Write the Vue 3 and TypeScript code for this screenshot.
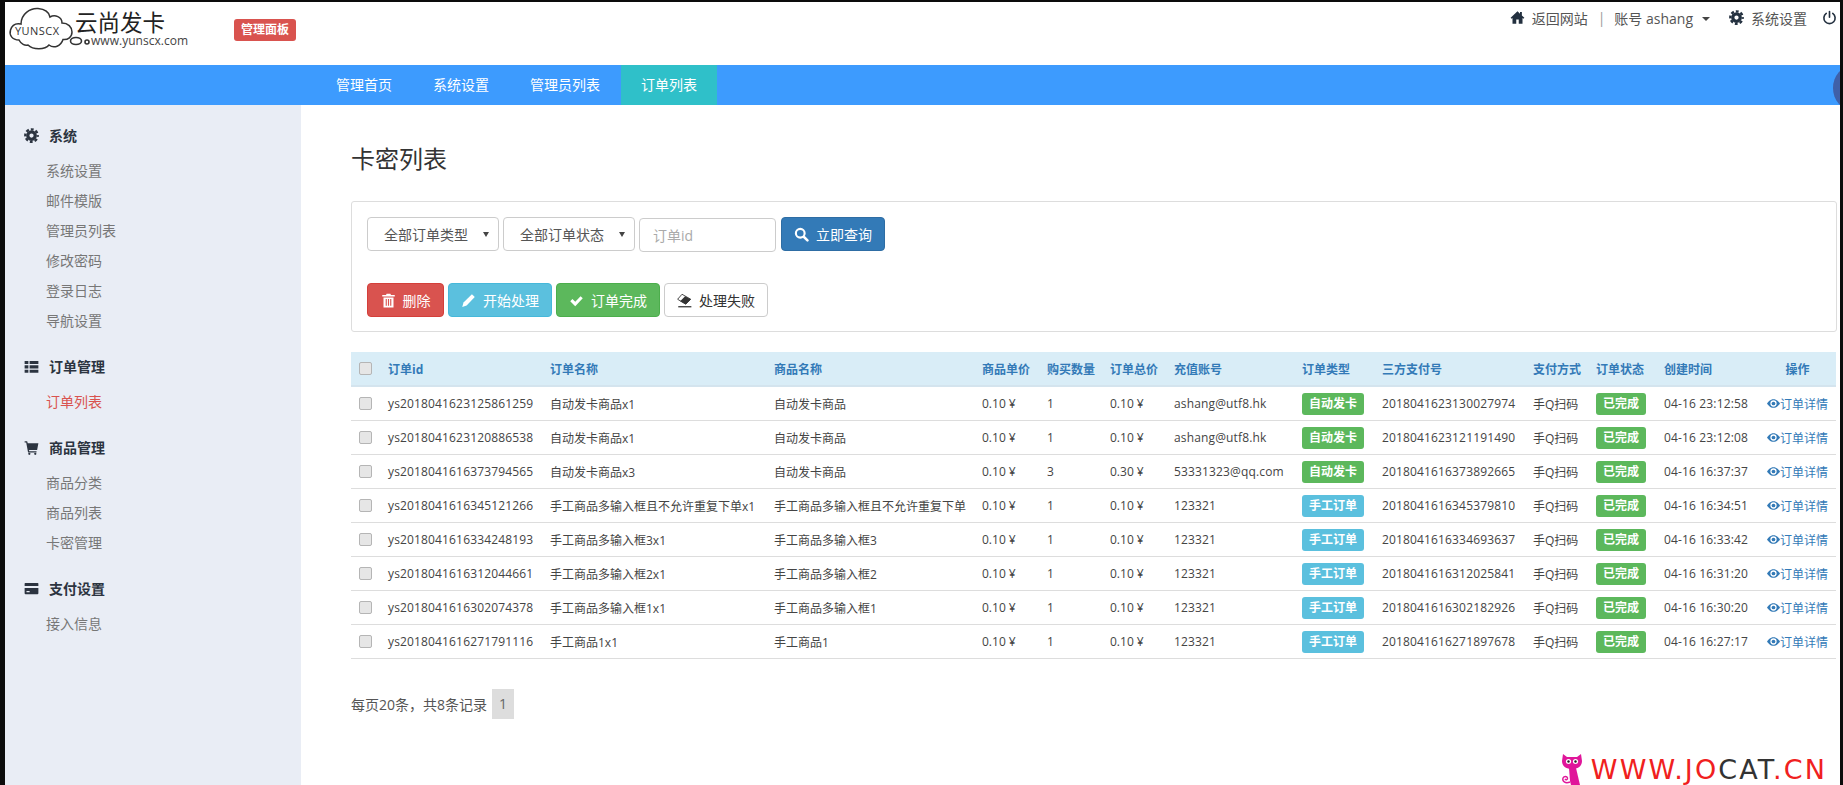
<template>
  <div class="page">
    <!-- icon sprite -->
    <svg class="sprite" aria-hidden="true">
      <symbol id="ic-gear" viewBox="0 0 24 24">
        <circle cx="12" cy="12" r="6" fill="none" stroke="currentColor" stroke-width="5.2" />
        <circle cx="12" cy="12" r="10" fill="none" stroke="currentColor" stroke-width="3.6" stroke-dasharray="4.6 3.25" stroke-dashoffset="2.3" />
      </symbol>
      <symbol id="ic-home" viewBox="0 0 24 24">
        <path fill="currentColor" d="M12 2 1 12.5l1.6 1.6L4 12.9V22h6v-7h4v7h6v-9.1l1.4 1.2 1.6-1.6L19 8.8V3h-3v3.1z" />
      </symbol>
      <symbol id="ic-power" viewBox="0 0 24 24">
        <path fill="none" stroke="currentColor" stroke-width="2.6" stroke-linecap="round" d="M12 2.5v9M6.8 5.5a9 9 0 1 0 10.4 0" />
      </symbol>
      <symbol id="ic-list" viewBox="0 0 24 24">
        <path fill="currentColor" d="M1 3h6v5H1zM9 3h14v5H9zM1 10h6v5H1zM9 10h14v5H9zM1 17h6v5H1zM9 17h14v5H9z" />
      </symbol>
      <symbol id="ic-cart" viewBox="0 0 24 24">
        <path fill="currentColor" d="M1 2h4l1 3h17l-2 11H8l.4 2H20v2H6.5L3.5 4H1z" />
        <circle cx="8.5" cy="22" r="1.8" fill="currentColor" />
        <circle cx="18" cy="22" r="1.8" fill="currentColor" />
      </symbol>
      <symbol id="ic-card" viewBox="0 0 24 24">
        <path fill="currentColor" d="M2 3h20a1.5 1.5 0 0 1 1 1.5V8H1V4.5A1.5 1.5 0 0 1 2 3zM1 11h22v8.5a1.5 1.5 0 0 1-1.5 1.5h-19A1.5 1.5 0 0 1 1 19.5zM4 16v2h5v-2z" />
      </symbol>
      <symbol id="ic-search" viewBox="0 0 24 24">
        <circle cx="10" cy="10" r="7" fill="none" stroke="currentColor" stroke-width="3.4" />
        <path stroke="currentColor" stroke-width="4" stroke-linecap="round" d="m16 16 5.5 5.5" />
      </symbol>
      <symbol id="ic-trash" viewBox="0 0 24 24">
        <path fill="currentColor" d="M9 1h6l1 2h6v2.5H2V3h6zM4 7h16v16H4zm3.5 2.5v11h1.8v-11zm3.6 0v11h1.8v-11zm3.6 0v11h1.8v-11z" fill-rule="evenodd" />
      </symbol>
      <symbol id="ic-pencil" viewBox="0 0 24 24">
        <path fill="currentColor" d="M17.5 2 22 6.5 9 20l-7 2.5L4 15z" />
      </symbol>
      <symbol id="ic-check" viewBox="0 0 24 24">
        <path fill="currentColor" d="m2 13 3.5-3.5L10 14l8.5-9L22 8.5 10 21z" />
      </symbol>
      <symbol id="ic-eraser" viewBox="0 0 24 24">
        <path fill="#fff" stroke="currentColor" stroke-width="1.4" d="M8 2 22 10l-8 8-13-8z" />
        <path fill="currentColor" d="M13 5l9 5-8 8-9-5z" />
        <path stroke="currentColor" stroke-width="2" d="M2 22h21" />
      </symbol>
      <symbol id="ic-eye" viewBox="0 0 24 24">
        <path fill="currentColor" fill-rule="evenodd" d="M12 4C6 4 2 9 0 12c2 3 6 8 12 8s10-5 12-8c-2-3-6-8-12-8zm0 2.2a5.8 5.8 0 1 1 0 11.6 5.8 5.8 0 0 1 0-11.6z" />
        <circle cx="12" cy="12" r="3.4" fill="currentColor" />
      </symbol>
    </svg>

    <header class="topbar">
      <svg class="logo" viewBox="5 2 190 62" width="190" height="62">
        <path d="M19 40C12 40 9 35 10.5 30C12 25 16 23 21 24C21 14 30 8 38 8.5C44 9 49 12 50 17C55 14 62 17 62 23C68 23 72 27 72 32C72 37 68 40 63 39.5C61 46 54 49 49 45C45 50 33 50 28 45C25 46 21 44 19 40Z" fill="none" stroke="#333" stroke-width="1.5" />
        <text x="15" y="35" class="logo-en" textLength="44">YUNSCX</text>
        <text x="75" y="31" class="logo-cn">云尚发卡</text>
        <ellipse cx="76" cy="41" rx="5.5" ry="3.5" fill="none" stroke="#333" stroke-width="1.6" />
        <circle cx="87" cy="42" r="2" fill="none" stroke="#333" stroke-width="1.6" />
        <text x="91" y="45" class="logo-url" textLength="97">www.yunscx.com</text>
      </svg>
      <span class="badge">管理面板</span>
      <nav class="toplinks">
        <a class="toplink"><svg class="ico"><use href="#ic-home" /></svg>返回网站</a>
        <span class="sep">|</span>
        <a class="toplink">账号 ashang<i class="caret"></i></a>
        <a class="toplink"><svg class="ico"><use href="#ic-gear" /></svg>系统设置</a>
        <a class="toplink power"><svg class="ico"><use href="#ic-power" /></svg></a>
      </nav>
    </header>

    <div class="mainnav">
      <a v-for="item in navItems" :key="item" class="navitem" :class="{ active: item === '订单列表' }">{{ item }}</a>
      <span class="bubble"></span>
    </div>

    <div class="body">
      <aside class="sidebar">
        <section v-for="group in menu" :key="group.title" class="group">
          <h4 class="group-title"><svg class="group-ico"><use :href="'#' + group.icon" /></svg>{{ group.title }}</h4>
          <a v-for="link in group.links" :key="link" class="sidelink" :class="{ current: link === '订单列表' }">{{ link }}</a>
        </section>
      </aside>

      <main class="content">
        <h2 class="title">卡密列表</h2>

        <div class="panel">
          <div class="row-query">
            <span class="select-wrap">
              <select class="select"><option>全部订单类型</option></select>
            </span>
            <span class="select-wrap">
              <select class="select"><option>全部订单状态</option></select>
            </span>
            <input class="input" type="text" placeholder="订单id" />
            <button class="btn btn-primary query"><svg class="ico"><use href="#ic-search" /></svg>立即查询</button>
          </div>
          <div class="row-actions">
            <button class="btn btn-danger del"><svg class="ico"><use href="#ic-trash" /></svg>删除</button>
            <button class="btn btn-info act"><svg class="ico"><use href="#ic-pencil" /></svg>开始处理</button>
            <button class="btn btn-success act"><svg class="ico"><use href="#ic-check" /></svg>订单完成</button>
            <button class="btn btn-default act"><svg class="ico"><use href="#ic-eraser" /></svg>处理失败</button>
          </div>
        </div>

        <table class="orders">
          <colgroup>
            <col v-for="(w, i) in colWidths" :key="i" :style="{ width: w + 'px' }" />
          </colgroup>
          <thead>
            <tr>
              <th><input class="check" type="checkbox" /></th>
              <th v-for="h in headers" :key="h" :class="{ center: h === '操作' }">{{ h }}</th>
            </tr>
          </thead>
          <tbody>
            <tr v-for="o in orders" :key="o.id">
              <td><input class="check" type="checkbox" /></td>
              <td class="num">{{ o.id }}</td>
              <td>{{ o.name }}</td>
              <td>{{ o.goods }}</td>
              <td>0.10 ¥</td>
              <td>{{ o.qty }}</td>
              <td>{{ o.total }} ¥</td>
              <td class="num">{{ o.account }}</td>
              <td><span class="tag" :class="o.auto ? 'tag-green' : 'tag-blue'">{{ o.auto ? '自动发卡' : '手工订单' }}</span></td>
              <td class="num">{{ o.payNo }}</td>
              <td>手Q扫码</td>
              <td><span class="tag tag-green">已完成</span></td>
              <td class="num">{{ o.time }}</td>
              <td><a class="detail"><svg class="eye"><use href="#ic-eye" /></svg>订单详情</a></td>
            </tr>
          </tbody>
        </table>

        <div class="pager">
          <span>每页20条，共8条记录</span>
          <span class="pageno">1</span>
        </div>
      </main>
    </div>

    <div class="watermark">
      <svg class="cat" viewBox="0 0 22 32" width="22" height="32">
        <path fill="#e0169a" d="M2 1l4 3h10l4-3 1 7c0 5-4 8-10 8S1 13 1 8z" />
        <circle cx="7.5" cy="8.5" r="2.6" fill="#fff" />
        <circle cx="14.5" cy="8.5" r="2.6" fill="#fff" />
        <circle cx="7.5" cy="8.5" r="1.2" fill="#222" />
        <circle cx="14.5" cy="8.5" r="1.2" fill="#222" />
        <path fill="#e0169a" d="M8 15h7l4 17h-9l-1-4z" />
        <path fill="none" stroke="#e0169a" stroke-width="1.4" d="M9 29c-5 2-8-1-7-4 1-2 4-2 4.5 0 .4 1.5-1.5 2.5-2.5 1" />
      </svg>
      <span class="wm-text">WWW.JO<span class="wm-dark">CAT</span>.CN</span>
    </div>
  </div>
</template>

<script setup lang="ts">
interface MenuGroup {
  title: string
  icon: string
  links: string[]
}

interface Order {
  id: string
  name: string
  goods: string
  qty: number
  total: string
  account: string
  auto: boolean
  payNo: string
  time: string
}

const navItems = ['管理首页', '系统设置', '管理员列表', '订单列表']

const menu: MenuGroup[] = [
  { title: '系统', icon: 'ic-gear', links: ['系统设置', '邮件模版', '管理员列表', '修改密码', '登录日志', '导航设置'] },
  { title: '订单管理', icon: 'ic-list', links: ['订单列表'] },
  { title: '商品管理', icon: 'ic-cart', links: ['商品分类', '商品列表', '卡密管理'] },
  { title: '支付设置', icon: 'ic-card', links: ['接入信息'] }
]

const colWidths = [29, 162, 224, 208, 65, 63, 64, 128, 80, 151, 63, 68, 103, 77]

const headers = ['订单id', '订单名称', '商品名称', '商品单价', '购买数量', '订单总价', '充值账号', '订单类型', '三方支付号', '支付方式', '订单状态', '创建时间', '操作']

const orders: Order[] = [
  { id: 'ys2018041623125861259', name: '自动发卡商品x1', goods: '自动发卡商品', qty: 1, total: '0.10', account: 'ashang@utf8.hk', auto: true, payNo: '2018041623130027974', time: '04-16 23:12:58' },
  { id: 'ys2018041623120886538', name: '自动发卡商品x1', goods: '自动发卡商品', qty: 1, total: '0.10', account: 'ashang@utf8.hk', auto: true, payNo: '2018041623121191490', time: '04-16 23:12:08' },
  { id: 'ys2018041616373794565', name: '自动发卡商品x3', goods: '自动发卡商品', qty: 3, total: '0.30', account: '53331323@qq.com', auto: true, payNo: '2018041616373892665', time: '04-16 16:37:37' },
  { id: 'ys2018041616345121266', name: '手工商品多输入框且不允许重复下单x1', goods: '手工商品多输入框且不允许重复下单', qty: 1, total: '0.10', account: '123321', auto: false, payNo: '2018041616345379810', time: '04-16 16:34:51' },
  { id: 'ys2018041616334248193', name: '手工商品多输入框3x1', goods: '手工商品多输入框3', qty: 1, total: '0.10', account: '123321', auto: false, payNo: '2018041616334693637', time: '04-16 16:33:42' },
  { id: 'ys2018041616312044661', name: '手工商品多输入框2x1', goods: '手工商品多输入框2', qty: 1, total: '0.10', account: '123321', auto: false, payNo: '2018041616312025841', time: '04-16 16:31:20' },
  { id: 'ys2018041616302074378', name: '手工商品多输入框1x1', goods: '手工商品多输入框1', qty: 1, total: '0.10', account: '123321', auto: false, payNo: '2018041616302182926', time: '04-16 16:30:20' },
  { id: 'ys2018041616271791116', name: '手工商品1x1', goods: '手工商品1', qty: 1, total: '0.10', account: '123321', auto: false, payNo: '2018041616271897678', time: '04-16 16:27:17' }
]
</script>

<style>
html,
body {
  margin: 0;
  background: #0c0c0c;
}
</style>

<style scoped>
.page {
  position: relative;
  box-sizing: border-box;
  height: 783px;
  margin: 2px 3px 0 5px;
  background: #fff;
  overflow: hidden;
  font-family: "Open Sans", "Noto Sans CJK SC", sans-serif;
  font-size: 14px;
  color: #555;
}

.sprite {
  position: absolute;
  width: 0;
  height: 0;
}

.topbar {
  display: flex;
  height: 63px;
}

.logo {
  flex: none;
}

.logo-en {
  font-size: 11px;
  fill: #333;
}

.logo-cn {
  font-size: 22.5px;
  fill: #222;
}

.logo-url {
  font-size: 12px;
  fill: #444;
}

.badge {
  flex: none;
  align-self: flex-start;
  margin: 17px 0 0 39px;
  padding: 0 7px;
  height: 22px;
  line-height: 22px;
  border-radius: 3px;
  background: #d9534f;
  color: #fff;
  font-size: 12px;
  font-weight: 700;
}

.toplinks {
  display: flex;
  align-items: center;
  align-self: flex-start;
  height: 31px;
  margin-left: auto;
  padding-right: 3px;
  white-space: nowrap;
}

.toplink {
  display: flex;
  align-items: center;
  color: #555;
}

.ico {
  flex: none;
  width: 15px;
  height: 15px;
  margin-right: 7px;
}

.toplink .ico {
  color: #23303f;
}

.sep {
  margin: 0 9px 0 10px;
  color: #999;
}

.caret {
  width: 0;
  height: 0;
  margin: 2px 19px 0 9px;
  border: 4px solid transparent;
  border-top-color: #444;
  border-bottom: 0;
}

.power {
  margin-left: 15px;
}

.power .ico {
  margin-right: 0;
}

.mainnav {
  position: relative;
  display: flex;
  gap: 1px;
  height: 40px;
  padding-left: 311px;
  background: #3d9bfe;
}

.navitem {
  padding: 0 20px;
  line-height: 40px;
  color: #fff;
}

.navitem.active {
  background: #2fc0c9;
}

.bubble {
  position: absolute;
  top: 1px;
  right: -31px;
  width: 38px;
  height: 44px;
  border-radius: 50%;
  background: #3f60a8;
}

.body {
  display: flex;
  height: 680px;
}

.sidebar {
  flex: none;
  box-sizing: border-box;
  width: 296px;
  padding-top: 11px;
  background: #e9edf5;
}

.group + .group {
  margin-top: 11px;
}

.group-title {
  display: flex;
  align-items: center;
  box-sizing: border-box;
  height: 40px;
  margin: 0;
  padding: 0 0 2px 19px;
  font-size: 14px;
  font-weight: 700;
  color: #2c3440;
}

.group-ico {
  width: 15px;
  height: 15px;
  margin-right: 10px;
}

.sidelink {
  display: block;
  height: 30px;
  padding-left: 41px;
  line-height: 30px;
  color: #777;
}

.sidelink.current {
  color: #d9534f;
}

.content {
  flex: 1;
  min-width: 0;
  padding: 37px 3px 0 50px;
}

.title {
  height: 34px;
  margin: 0 0 25px;
  font-size: 24px;
  font-weight: 400;
  line-height: 34px;
  color: #333;
}

.panel {
  box-sizing: border-box;
  height: 131px;
  padding: 15px;
  border: 1px solid #ddd;
  border-radius: 3px;
}

.row-query,
.row-actions {
  display: flex;
  gap: 4px;
}

.row-query {
  align-items: flex-start;
  margin-bottom: 31px;
}

.select-wrap {
  position: relative;
  display: block;
}

.select-wrap::after {
  content: "";
  position: absolute;
  top: 15px;
  right: 10px;
  border: 3px solid transparent;
  border-top: 5px solid #444;
  border-bottom: 0;
  pointer-events: none;
}

.select {
  display: block;
  box-sizing: border-box;
  width: 132px;
  height: 34px;
  padding: 0 24px 0 16px;
  border: 1px solid #ccc;
  border-radius: 4px;
  background: #fff;
  appearance: none;
  font: inherit;
  color: #555;
}

.input {
  box-sizing: border-box;
  width: 137px;
  height: 34px;
  margin: 1px 1px 0 0;
  padding: 0 13px;
  border: 1px solid #ccc;
  border-radius: 4px;
  font: inherit;
  color: #555;
}

.input::placeholder {
  color: #aaa;
}

.btn {
  display: flex;
  align-items: center;
  justify-content: center;
  box-sizing: border-box;
  height: 34px;
  padding: 0;
  border: 1px solid transparent;
  border-radius: 4px;
  font: inherit;
  color: #fff;
}

.query {
  width: 104px;
}

.del {
  width: 77px;
}

.act {
  width: 104px;
}

.btn-primary {
  background: #337ab7;
  border-color: #2e6da4;
}

.btn-danger {
  background: #d9534f;
  border-color: #d43f3a;
}

.btn-info {
  background: #5bc0de;
  border-color: #46b8da;
}

.btn-success {
  background: #5cb85c;
  border-color: #4cae4c;
}

.btn-default {
  background: #fff;
  border-color: #ccc;
  color: #333;
}

.orders {
  width: 1485px;
  margin-top: 20px;
  border-collapse: separate;
  border-spacing: 0;
  table-layout: fixed;
  font-size: 12px;
  color: #444;
}

.orders th,
.orders td {
  box-sizing: border-box;
  padding: 0 8px;
  text-align: left;
  white-space: nowrap;
}

.orders th {
  height: 35px;
  background: #d9edf7;
  border-bottom: 2px solid #d4e4ee;
  color: #337ab7;
  font-weight: 700;
}

.orders th.center {
  text-align: center;
}

.orders td {
  height: 34px;
  border-bottom: 1px solid #ddd;
}

.num {
  letter-spacing: 0.15px;
}

.check {
  display: block;
  width: 13px;
  height: 13px;
  margin: 0;
  border: 1px solid #b5b5b5;
  border-radius: 2px;
  background: #e6e6e6;
  appearance: none;
}

.tag {
  display: inline-block;
  height: 22px;
  padding: 0 7px;
  border-radius: 3px;
  color: #fff;
  font-weight: 700;
  line-height: 22px;
  vertical-align: middle;
}

.tag-green {
  background: #5cb85c;
}

.tag-blue {
  background: #5bc0de;
}

.detail {
  display: flex;
  align-items: center;
  color: #337ab7;
}

.eye {
  flex: none;
  width: 13px;
  height: 13px;
}

.pager {
  display: flex;
  align-items: center;
  gap: 5px;
  margin-top: 30px;
}

.pageno {
  width: 22px;
  height: 30px;
  background: #ddd;
  color: #666;
  line-height: 30px;
  text-align: center;
}

.watermark {
  position: absolute;
  right: 13px;
  bottom: 0;
  display: flex;
  align-items: flex-end;
  gap: 8px;
}

.wm-text {
  margin-bottom: 1px;
  font-family: "DejaVu Sans", sans-serif;
  font-size: 27px;
  line-height: 28px;
  letter-spacing: 2.1px;
  color: #f02020;
}

.wm-dark {
  color: #333;
}
</style>
